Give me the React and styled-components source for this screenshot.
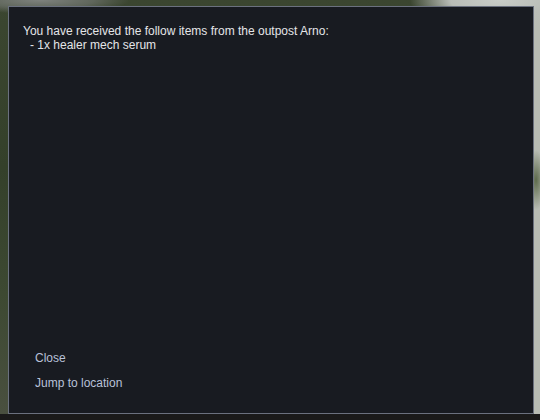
import React from "react";
import styled, { createGlobalStyle } from "styled-components";

const GlobalStyle = createGlobalStyle`
  html, body {
    margin: 0;
    padding: 0;
    width: 540px;
    height: 420px;
    overflow: hidden;
    background: #1b1b1b;
  }
`;

// blurred map behind the modal
const MapBackdrop = styled.div`
  width: 540px;
  height: 420px;
  box-sizing: border-box;
  padding: 6px 0 0 8px;
  background:
    linear-gradient(to bottom, transparent 0, transparent 414px, #1a1a1a 414px),
    radial-gradient(ellipse 90px 14px at 40px 0px, #7e827e 0%, rgba(120, 124, 120, 0.6) 60%, transparent 100%),
    radial-gradient(ellipse 90px 30px at 500px 0px, #c9cdc8 0%, #b9bdb7 55%, transparent 100%),
    radial-gradient(ellipse 10px 30px at 536px 180px, #5d6a4c 0%, transparent 100%),
    linear-gradient(to right, transparent 0, transparent 533px, #b8bcb4 533px),
    linear-gradient(to bottom, #3b4630 0%, #34402a 40%, #3d4932 70%, #4a5040 100%);
  font-family: "Liberation Sans", Arial, Helvetica, sans-serif;
`;

const Dialog = styled.div`
  width: 526px;
  height: 408px;
  box-sizing: border-box;
  border: 1px solid #6b717f;
  background: #181b21;
  display: flex;
  flex-direction: column;
  padding: 17px 14px 23px 14px;
`;

const Message = styled.div`
  flex: 1;
  color: #e4e5e8;
  font-size: 12px;
  line-height: 14px;
`;

const ItemLine = styled.div`
  padding-left: 7px;
`;

const Actions = styled.div`
  display: flex;
  flex-direction: column;
  gap: 11px;
  padding-left: 12px;
`;

const ActionButton = styled.button`
  all: unset;
  cursor: pointer;
  color: #b9c1d9;
  font-family: "Liberation Sans", Arial, Helvetica, sans-serif;
  font-size: 12px;
  line-height: 14px;
  &:hover {
    color: #ffffff;
  }
`;

const App = () => {
  const items = ["1x healer mech serum"];

  return (
    <>
      <GlobalStyle />
      <MapBackdrop>
        <Dialog>
          <Message>
            You have received the follow items from the outpost Arno:
            {items.map((item, i) => (
              <ItemLine key={i}>- {item}</ItemLine>
            ))}
          </Message>
          <Actions>
            <ActionButton>Close</ActionButton>
            <ActionButton>Jump to location</ActionButton>
          </Actions>
        </Dialog>
      </MapBackdrop>
    </>
  );
};

export default App;
